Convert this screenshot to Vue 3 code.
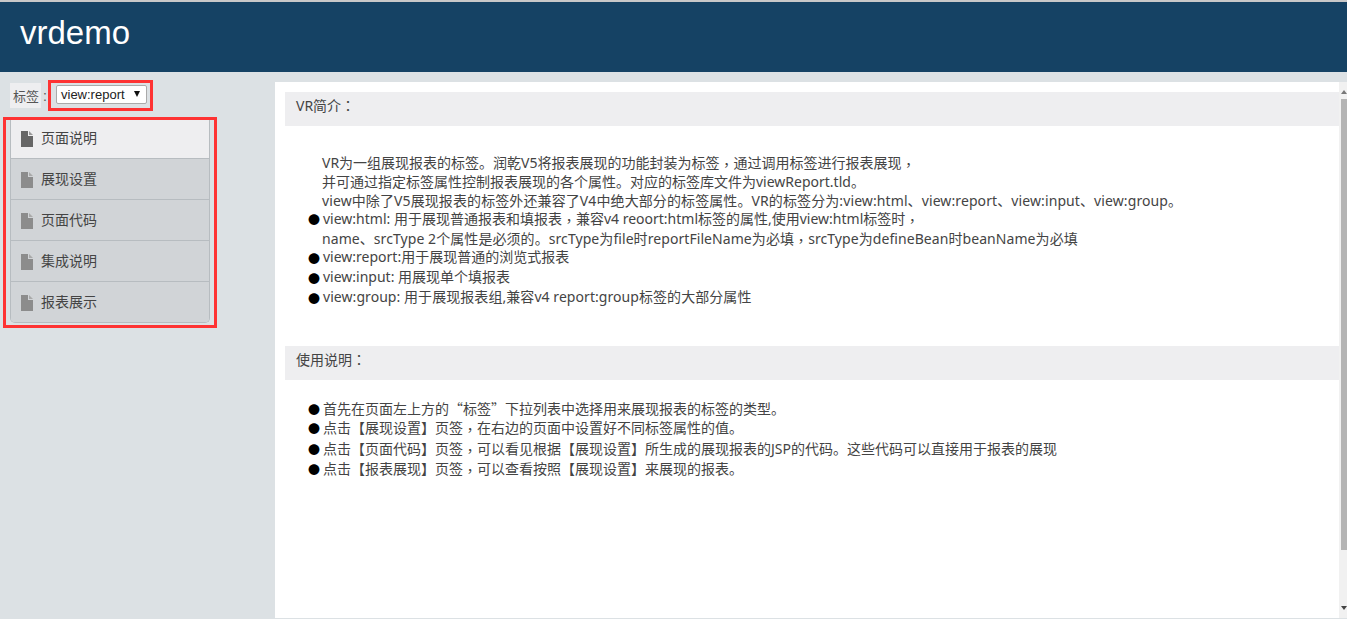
<script setup>
const tabs = ['页面说明', '展现设置', '页面代码', '集成说明', '报表展示']
const intro = [
  { text: 'VR为一组展现报表的标签。润乾V5将报表展现的功能封装为标签，通过调用标签进行报表展现，', h: 20 },
  { text: '并可通过指定标签属性控制报表展现的各个属性。对应的标签库文件为viewReport.tld。', h: 19 },
  { text: 'view中除了V5展现报表的标签外还兼容了V4中绝大部分的标签属性。VR的标签分为:view:html、view:report、view:input、view:group。', h: 17, ls: 0.1 },
  { text: 'view:html: 用于展现普通报表和填报表，兼容v4 reoort:html标签的属性,使用view:html标签时，', h: 20, dot: true },
  { text: 'name、srcType 2个属性是必须的。srcType为file时reportFileName为必填，srcType为defineBean时beanName为必填', h: 19, ls: 0.07 },
  { text: 'view:report:用于展现普通的浏览式报表', h: 20, dot: true },
  { text: 'view:input: 用展现单个填报表', h: 20, dot: true },
  { text: 'view:group: 用于展现报表组,兼容v4 report:group标签的大部分属性', h: 20, dot: true, ls: 0.06 }
]
const usage = [
  { text: '首先在页面左上方的“标签”下拉列表中选择用来展现报表的标签的类型。', h: 19 },
  { text: '点击【展现设置】页签，在右边的页面中设置好不同标签属性的值。', h: 21 },
  { text: '点击【页面代码】页签，可以看见根据【展现设置】所生成的展现报表的JSP的代码。这些代码可以直接用于报表的展现', h: 20 },
  { text: '点击【报表展现】页签，可以查看按照【展现设置】来展现的报表。', h: 20 }
]
const split = (s) => s.split(/([，：“”])/).filter(Boolean)
const cls = (p) => (p === '，' || p === '：' ? 'pm' : p === '“' || p === '”' ? 'qm' : '')
</script>

<template>
  <div class="page">
    <header class="header"><h1>vrdemo</h1></header>
    <div class="body">
      <aside class="side">
        <div class="tagrow">
          <span class="taglabel">标签</span>
          <span class="colon">:</span>
          <div class="redbox selbox">
            <div class="select">
              <span>view:report</span>
              <i class="caret"></i>
            </div>
          </div>
        </div>
        <div class="menubox">
          <ul class="menu">
            <li v-for="(t, i) in tabs" :key="t" :class="{ active: i === 0 }">
              <svg class="doc" width="12" height="16" viewBox="0 0 12 16">
                <path d="M0 0H7V5H12V16H0Z" />
                <path class="fold" d="M8 0L12 4H8Z" />
              </svg>
              <span class="tabtext">{{ t }}</span>
            </li>
          </ul>
        </div>
      </aside>
      <main class="panel">
        <div class="content">
          <h2 class="title"><span v-for="(p, i) in split('VR简介：')" :key="i" :class="cls(p)">{{ p }}</span></h2>
          <div class="intro">
            <div v-for="l in intro" :key="l.text" class="line" :class="{ dotted: l.dot }" :style="{ height: l.h + 'px', letterSpacing: (l.ls || 0) + 'px' }">
              <span v-if="l.dot" class="dot">●</span><span v-for="(p, i) in split(l.text)" :key="i" :class="cls(p)">{{ p }}</span>
            </div>
          </div>
          <h2 class="title"><span v-for="(p, i) in split('使用说明：')" :key="i" :class="cls(p)">{{ p }}</span></h2>
          <div class="usage">
            <div v-for="u in usage" :key="u.text" class="line dotted" :style="{ height: u.h + 'px' }">
              <span class="dot">●</span><span v-for="(p, i) in split(u.text)" :key="i" :class="cls(p)">{{ p }}</span>
            </div>
          </div>
        </div>
        <div class="scrollbar">
          <i class="arrow up"></i>
          <div class="thumb"></div>
          <i class="arrow down"></i>
        </div>
      </main>
    </div>
  </div>
</template>

<style>
html, body { margin: 0; height: 100%; overflow: hidden; }
</style>

<style scoped>
.page {
  width: 1347px;
  height: 619px;
  display: flex;
  flex-direction: column;
  background: #dce1e4;
  font-family: "Liberation Sans", "Noto Sans CJK SC", Arial, sans-serif;
  font-size: 14px;
  color: #333;
  overflow: hidden;
}
.header {
  height: 70px;
  margin-top: 2px;
  flex: none;
  background: #154264;
  box-sizing: border-box;
  padding-left: 20px;
  position: relative;
}
.header::before {
  content: "";
  position: absolute;
  left: 0;
  right: 0;
  top: -2px;
  height: 2px;
  background: #c8c8c8;
}
h1 {
  margin: 0;
  padding-top: 13px;
  font-size: 33px;
  line-height: 36px;
  font-weight: 400;
  color: #fff;
}
.body {
  flex: 1;
  display: flex;
  min-height: 0;
}
.side {
  width: 275px;
  flex: none;
  box-sizing: border-box;
  padding: 8px 0 0 3px;
}
.tagrow {
  display: flex;
  align-items: center;
  height: 31px;
}
.taglabel {
  width: 31px;
  margin-left: 7px;
  height: 25px;
  line-height: 27px;
  background: #eeeef0;
  padding-left: 3px;
  box-sizing: border-box;
  white-space: nowrap;
  color: #555;
  font-size: 13px;
}
.colon {
  width: 6px;
  text-align: right;
  color: #555;
}
.redbox {
  border: 3px solid #fe3333;
  box-sizing: border-box;
  margin-left: 1px;
}
.selbox {
  width: 105px;
  height: 31px;
  padding: 2px 4px 0 5px;
}
.select {
  width: 91px;
  height: 19px;
  box-sizing: border-box;
  background: #fff;
  border: 1px solid #aaa;
  border-radius: 2px;
  display: flex;
  align-items: center;
  justify-content: space-between;
  padding: 0 6px 0 4px;
  font-size: 13px;
  color: #222;
}
.caret {
  width: 0;
  height: 0;
  margin-top: -2px;
  border-left: 3.5px solid transparent;
  border-right: 3.5px solid transparent;
  border-top: 6px solid #111;
}
.menubox {
  width: 214px;
  height: 211px;
  margin-top: 6px;
  padding: 1px 7px 0;
  box-sizing: border-box;
  position: relative;
}
.menubox::after {
  content: "";
  position: absolute;
  inset: 0;
  border: 3px solid #fe3333;
  pointer-events: none;
}
.menu {
  list-style: none;
  margin: 0;
  padding: 0;
  border: 1px solid #b7bcc0;
  border-top: 0;
  border-radius: 0 0 5px 5px;
  overflow: hidden;
  height: 205px;
  box-sizing: border-box;
}
.menu li {
  height: 41px;
  box-sizing: border-box;
  display: flex;
  align-items: center;
  padding-left: 10px;
  background: #d1d4d7;
  border-bottom: 1px solid #b7bcc0;
  color: #444;
}
.menu li:last-child { border-bottom: 0; height: 40px; }
.menu li.active { background: #eeeef0; }
.tabtext { margin-top: -2px; }
.doc { margin-right: 8px; margin-top: 2px; fill: #8c8c8c; }
.active .doc { fill: #666; }
.fold { fill: #a9a9a9; }
.active .fold { fill: #999; }
.panel {
  width: 1072px;
  height: 536px;
  margin-top: 10px;
  background: #fff;
  flex: none;
  display: flex;
}
.content {
  flex: 1;
  box-sizing: border-box;
  padding: 10px 0 0 10px;
  min-width: 0;
  font-family: "Noto Sans", "Noto Sans CJK SC", sans-serif;
}
.title {
  margin: 0;
  height: 34px;
  line-height: 26px;
  padding-left: 11px;
  font-size: 14px;
  font-weight: 400;
  color: #444;
  background: #eeeef0;
}
.intro {
  padding-top: 27px;
  height: 220px;
  box-sizing: border-box;
}
.usage {
  padding-top: 19px;
}
.line {
  padding-left: 37px;
  line-height: 18px;
  white-space: nowrap;
  color: #444;
  position: relative;
}
.dotted { padding-left: 38px; }
.pm {
  font-family: "Noto Sans CJK TC", sans-serif;
  position: relative;
  top: 2px;
}
.title .pm { top: 0; }
.qm { font-family: "Noto Sans CJK SC", sans-serif; }
.dot {
  position: absolute;
  left: 23px;
  top: 2px;
  color: #000;
  font-size: 12px;
  font-family: "Noto Sans CJK SC", sans-serif;
}
.scrollbar {
  width: 8px;
  flex: none;
  background: #f1f1f1;
  position: relative;
}
.thumb {
  position: absolute;
  left: 2px;
  right: 0;
  top: 17px;
  height: 451px;
  background: #b4b4b4;
}
.arrow {
  position: absolute;
  right: 0;
  width: 0;
  height: 0;
  border-left: 3px solid transparent;
  border-right: 3px solid transparent;
}
.up { top: 8px; border-bottom: 4px solid #777; }
.down { bottom: 8px; border-top: 4px solid #444; }
</style>
